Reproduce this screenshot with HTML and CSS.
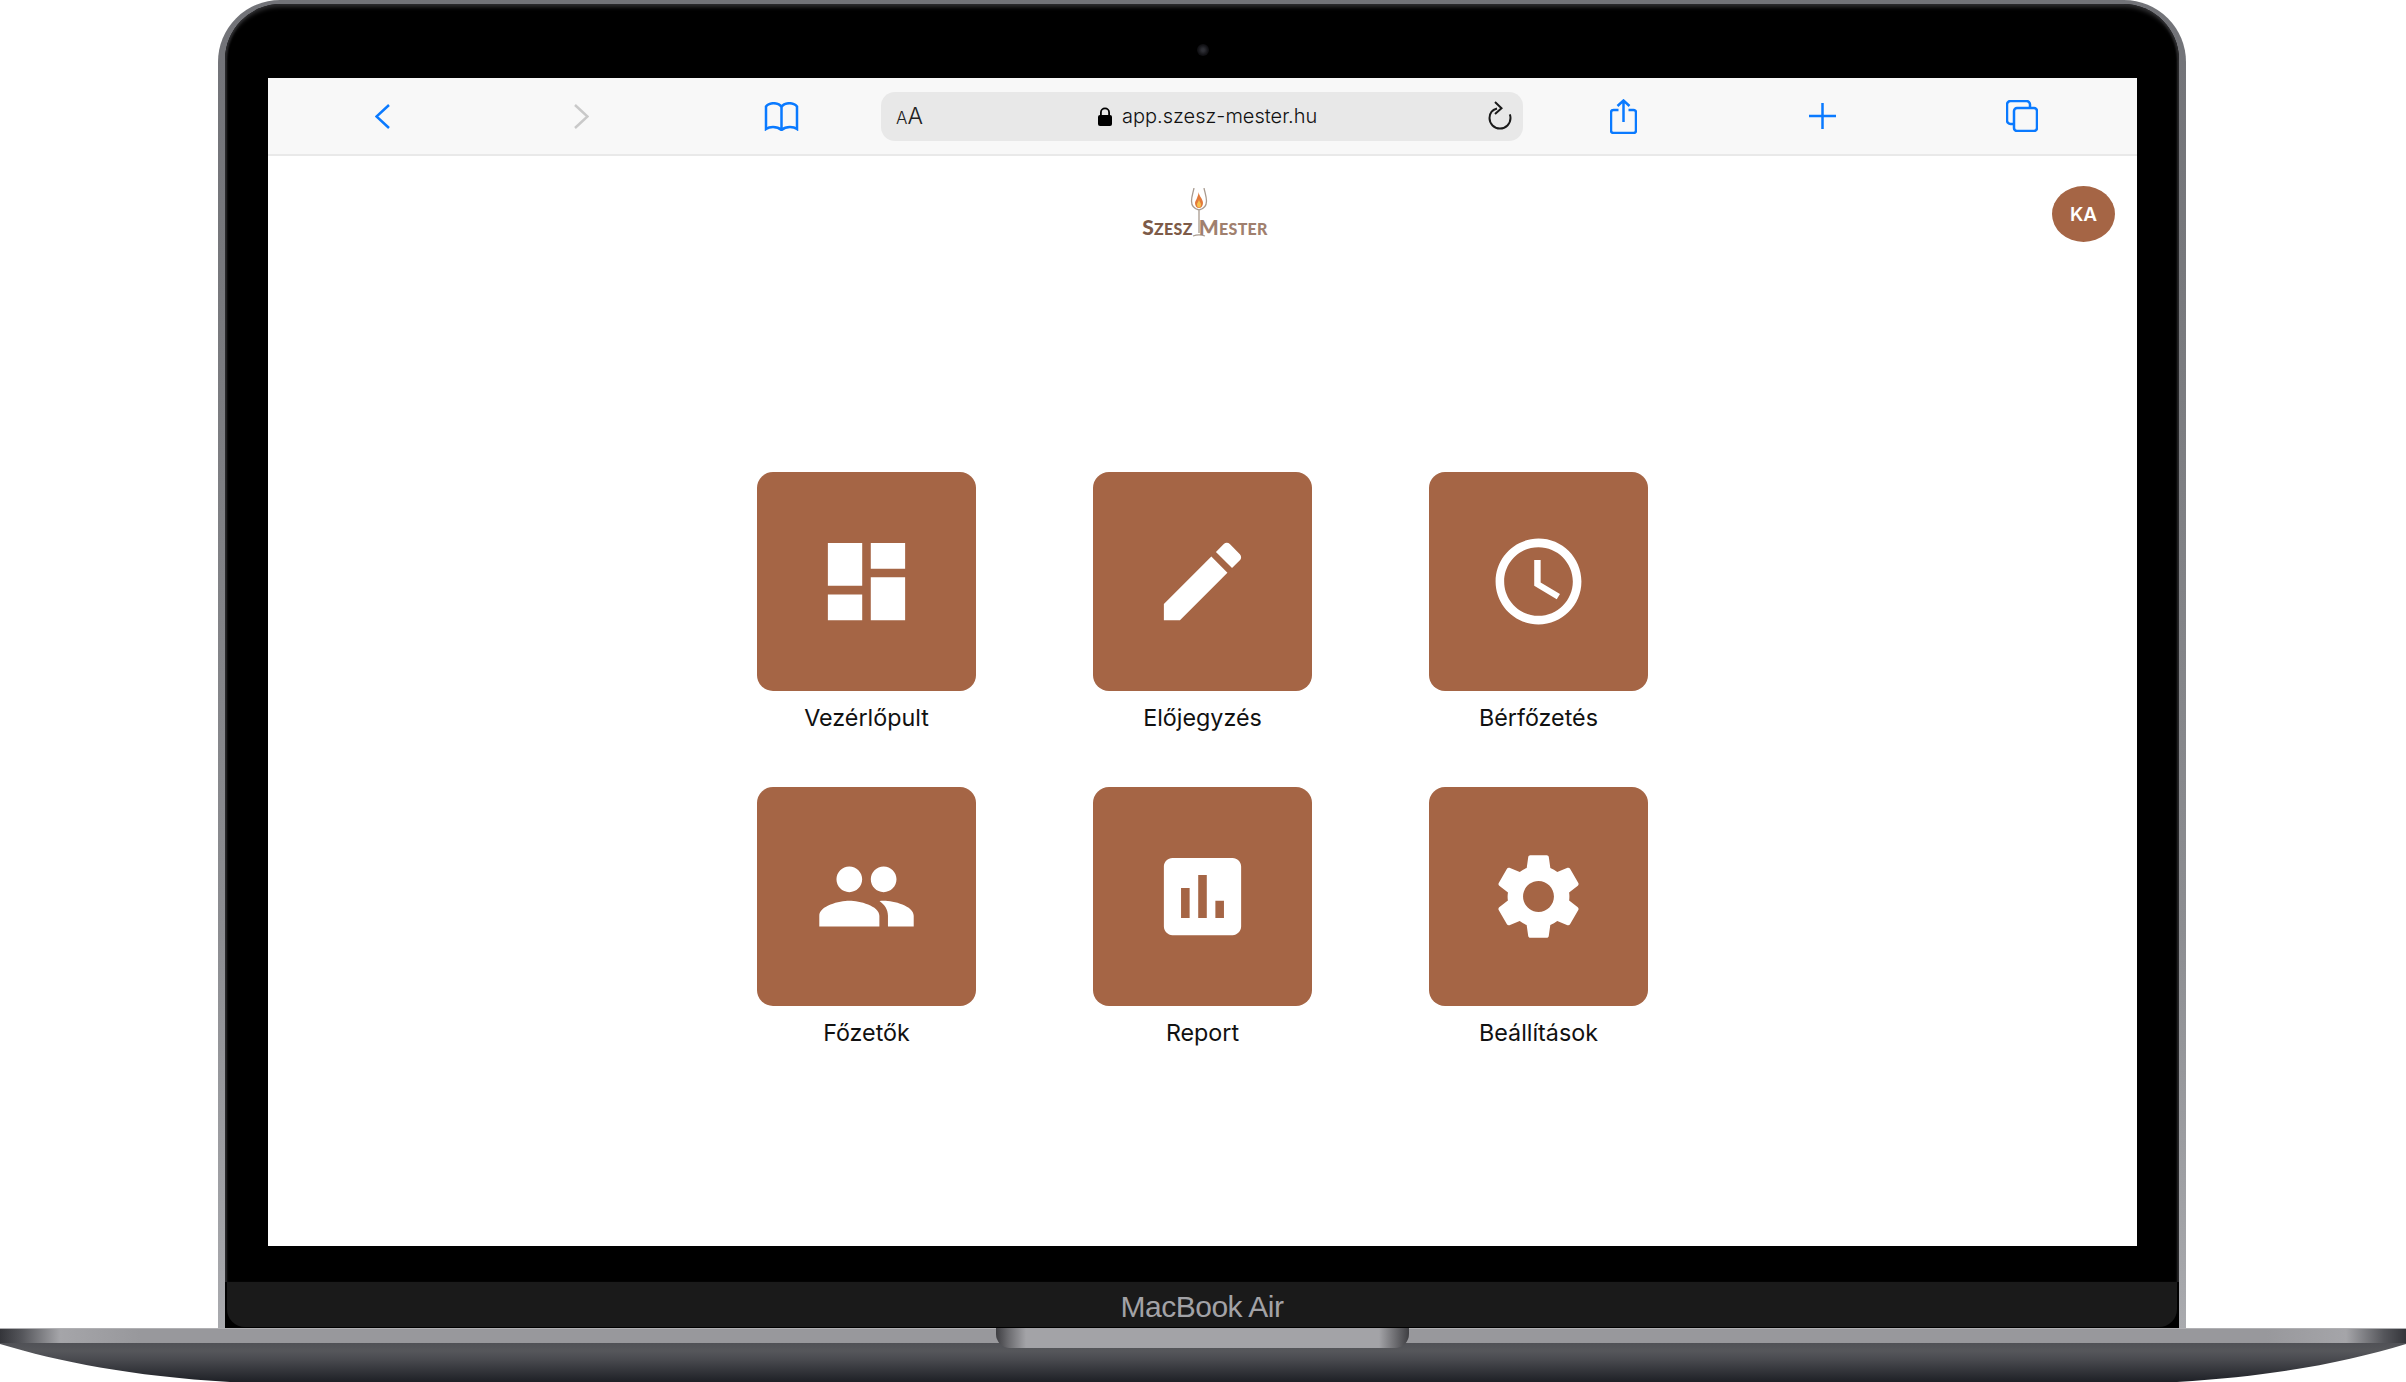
FILE: index.html
```html
<!DOCTYPE html>
<html lang="hu">
<head>
    <meta charset="UTF-8">
    <title>Szesz Mester</title>
    <link rel="stylesheet" href="styles.css">
</head>
<body>
    <div class="laptop">
        <div class="lid">
            <div class="bezel">
                <div class="camera-row"><span class="camera"></span></div>
                <div class="screen">
                    <div class="toolbar">
                        <svg class="tool-icon back" viewBox="0 0 15 25"><path d="M14 1 1.500 12.500 14 24"/></svg>
                        <svg class="tool-icon forward" viewBox="0 0 15 25"><path d="M1 1l12.500 11.500L1 24"/></svg>
                        <svg class="tool-icon book" viewBox="0 0 35 29"><path d="M17.500 5C16 2.500 13 1.200 9.500 1.200 6.500 1.200 3.500 2.500 2 4.500V27c2-1.500 4.500-2 7-2 3.500 0 6 .8 8.500 3 2.500-2.200 5-3 8.500-3 2.500 0 5 .5 7 2V4.500C31.500 2.500 28.500 1.200 25.500 1.200 22 1.200 19 2.500 17.500 5zM17.500 5V28"/></svg>
                        <div class="url-bar">
                            <span class="aa"><small>A</small>A</span>
                            <span class="address">
                                <svg class="lock" viewBox="0 0 14 19"><path d="M2 8V5.500a5 5 0 0 1 10 0V8h-1.800V5.500a3.200 3.200 0 0 0-6.400 0V8z"/><rect y="8" width="14" height="11" rx="2"/></svg>
                                app.szesz-mester.hu
                            </span>
                            <svg class="reload" viewBox="0 0 24 29"><path d="M9 7.500C4.500 8.800 1.500 12.500 1.500 17c0 5.800 4.600 10.500 10.500 10.500S22.500 22.800 22.500 17c0-1.300-.2-2.500-.7-3.700"/><path d="M7 1l6.500 6.200L7 13"/></svg>
                        </div>
                        <svg class="tool-icon share" viewBox="0 0 27 35"><path d="M8.500 11H3.500A2.500 2.500 0 0 0 1 13.500v18A2.500 2.500 0 0 0 3.500 34h20a2.500 2.500 0 0 0 2.500-2.500v-18A2.500 2.500 0 0 0 23.500 11H18.500M13.500 23V1.500M7.500 7l6-5.500 6 5.500"/></svg>
                        <svg class="tool-icon plus" viewBox="0 0 27 26"><path d="M13.500 0V26M0 13H27"/></svg>
                        <svg class="tool-icon tabs" viewBox="0 0 32 32"><path d="M7 24H4.500A3.500 3.500 0 0 1 1 20.500V4.500A3.500 3.500 0 0 1 4.500 1h16A3.500 3.500 0 0 1 24 4.500V7"/><rect x="8" y="8" width="23" height="23" rx="3"/></svg>
                    </div>
                    <div class="app">
                        <div class="app-header">
                            <div class="logo">
                                <svg class="logo-glass" viewBox="0 0 18 50">
                                    <path class="glass-line" d="M4 0C3 5 1.500 9 1.500 13c0 5 3 8 7.500 9 4.500-1 7.500-4 7.500-9 0-4-1.500-8-2.500-13M9 22V45M3 48c4-1.500 8-1.500 12 0"/>
                                    <path class="flame-outer" d="M8.500 4c.5 4 4.500 7 4.500 11 0 3-1.800 5-4 5s-4-2-4-5c0-2 1.500-3 2-5 .5-2 1.500-3 1.500-6z"/>
                                    <path class="flame-inner" d="M9 11c0 2.500 2 3.500 2 5.500S10.200 19.500 9 19.500 7 18.500 7 16.500 9 13.500 9 11z"/>
                                </svg>
                                <div class="logo-text"><span class="word-dark">S<small>ZESZ</small></span><span class="word-light">M<small>ESTER</small></span></div>
                            </div>
                            <div class="avatar">KA</div>
                        </div>
                        <div class="tiles">
                            <a class="tile" href="#">
                                <span class="tile-box"><svg viewBox="0 0 24 24"><path d="M3 13h8V3H3v10zm0 8h8v-6H3v6zm10 0h8V11h-8v10zm0-18v6h8V3h-8z"/></svg></span>
                                <span class="tile-label">Vezérlőpult</span>
                            </a>
                            <a class="tile" href="#">
                                <span class="tile-box"><svg viewBox="0 0 24 24"><path d="M3 17.250V21h3.750L17.810 9.940l-3.750-3.750L3 17.250zM20.710 7.040c.39-.39.39-1.020 0-1.410l-2.340-2.340c-.39-.39-1.020-.39-1.410 0l-1.830 1.830 3.750 3.750 1.830-1.830z"/></svg></span>
                                <span class="tile-label">Előjegyzés</span>
                            </a>
                            <a class="tile" href="#">
                                <span class="tile-box"><svg viewBox="0 0 24 24"><path d="M11.990 2C6.470 2 2 6.480 2 12s4.470 10 9.990 10C17.520 22 22 17.520 22 12S17.520 2 11.990 2zM12 20c-4.420 0-8-3.580-8-8s3.580-8 8-8 8 3.580 8 8-3.580 8-8 8zM12.500 7H11v6l5.250 3.150.75-1.230-4.500-2.670z"/></svg></span>
                                <span class="tile-label">Bérfőzetés</span>
                            </a>
                            <a class="tile" href="#">
                                <span class="tile-box"><svg viewBox="0 0 24 24"><path d="M16 11c1.660 0 2.990-1.340 2.990-3S17.660 5 16 5c-1.660 0-3 1.340-3 3s1.340 3 3 3zm-8 0c1.660 0 2.990-1.340 2.990-3S9.660 5 8 5C6.340 5 5 6.340 5 8s1.340 3 3 3zm0 2c-2.330 0-7 1.170-7 3.500V19h14v-2.500c0-2.330-4.670-3.500-7-3.500zm8 0c-.29 0-.62.020-.97.050 1.160.84 1.970 1.970 1.970 3.450V19h6v-2.500c0-2.330-4.670-3.500-7-3.500z"/></svg></span>
                                <span class="tile-label">Főzetők</span>
                            </a>
                            <a class="tile" href="#">
                                <span class="tile-box"><svg viewBox="0 0 24 24"><path d="M19 3H5c-1.100 0-2 .9-2 2v14c0 1.100.9 2 2 2h14c1.100 0 2-.9 2-2V5c0-1.100-.9-2-2-2zM9 17H7v-7h2v7zm4 0h-2V7h2v10zm4 0h-2v-4h2v4z"/></svg></span>
                                <span class="tile-label">Report</span>
                            </a>
                            <a class="tile" href="#">
                                <span class="tile-box"><svg viewBox="0 0 24 24"><path d="M19.140 12.940c.04-.3.060-.61.060-.94 0-.32-.02-.64-.07-.94l2.030-1.580c.18-.14.230-.41.120-.61l-1.920-3.320c-.12-.22-.37-.29-.59-.22l-2.390.96c-.5-.38-1.030-.7-1.620-.94l-.36-2.540c-.04-.24-.24-.41-.48-.41h-3.840c-.24 0-.43.17-.47.41l-.36 2.540c-.59.24-1.130.57-1.620.94l-2.390-.96c-.22-.08-.47 0-.59.22L2.740 8.870c-.12.21-.08.47.12.61l2.030 1.580c-.05.3-.09.63-.09.94s.02.64.07.94l-2.030 1.580c-.18.14-.23.41-.12.61l1.920 3.320c.12.22.37.29.59.22l2.390-.96c.5.38 1.030.7 1.620.94l.36 2.540c.05.24.24.41.48.41h3.840c.24 0 .44-.17.47-.41l.36-2.540c.59-.24 1.130-.56 1.620-.94l2.390.96c.22.08.47 0 .59-.22l1.920-3.320c.12-.22.070-.47-.12-.61l-2.010-1.580zM12 15.600c-1.980 0-3.600-1.620-3.600-3.600s1.620-3.600 3.600-3.600 3.600 1.620 3.600 3.600-1.620 3.600-3.600 3.600z"/></svg></span>
                                <span class="tile-label">Beállítások</span>
                            </a>
                        </div>
                    </div>
                </div>
            </div>
            <div class="chin-back"><div class="chin">MacBook Air</div></div>
        </div>
        <div class="base">
            <div class="base-band"></div>
            <div class="base-body"></div>
            <div class="notch"></div>
        </div>
    </div>
</body>
</html>
```

FILE: styles.css
```css
/* Reset */
* {
    margin: 0;
    padding: 0;
    box-sizing: border-box;
}

body {
    width: 2406px;
    height: 1382px;
    overflow: hidden;
    background-color: #fff;
    font-family: 'Inter', sans-serif;
}

/* Laptop frame */
.laptop {
    display: flex;
    flex-direction: column;
    height: 1382px;
}

.lid {
    display: flex;
    flex-direction: column;
    width: 1968px;
    height: 1328px;
    margin-left: 218px;
    padding: 4px 7px 0 7px;
    background: linear-gradient(to bottom, #727378, #77787c 20%, #8c8d91 70%, #a9aaae);
    border-radius: 62px 62px 0 0;
}

.bezel {
    display: flex;
    flex-direction: column;
    height: 1278px;
    padding: 0 42px 36px 43px;
    background-color: #000;
    border-radius: 56px 56px 0 0;
    box-shadow: inset 0 5px 4px -2px #2e2e30, inset 3px 0 2px -1px #2a2a2c, inset -3px 0 2px -1px #2a2a2c;
}

.camera-row {
    display: flex;
    justify-content: center;
    align-items: center;
    height: 74px;
    padding-top: 18px;
}

.camera {
    width: 12px;
    height: 12px;
    border-radius: 50%;
    background: radial-gradient(circle, #2e2f35 15%, #141418 55%, #000);
}

.chin-back {
    height: 46px;
    padding: 0 2px 1px;
    background-color: #000;
}

.chin {
    display: flex;
    justify-content: center;
    align-items: center;
    height: 45px;
    background-color: #1a1a1a;
    border-radius: 0 0 18px 18px;
    color: #a2a2a6;
    font-family: 'Liberation Sans', sans-serif;
    font-size: 30px;
    letter-spacing: -0.5px;
    padding-top: 4px;
}

/* Base */
.base {
    position: relative;
    height: 54px;
}

.base-band {
    height: 15px;
    border-top: 1px solid #b0b0b3;
    background: linear-gradient(to right, #34353a 0, #55565b 22px, #a5a5a9 60px, #98989c 140px, #98989c 2266px, #a5a5a9 2346px, #55565b 2384px, #34353a 100%);
}

.base-body {
    height: 39px;
    background: linear-gradient(to bottom, #505156 0, #56575b 8px, #4a4b50 16px, #1e2026 100%);
    clip-path: path('M0 1 C60 19 130 33 230 39 L2177 39 C2277 33 2346 19 2406 1 L2406 0 L0 0 Z');
}

.notch {
    position: absolute;
    top: 0;
    left: 996px;
    width: 413px;
    height: 20px;
    background: linear-gradient(to right, #3e3e42 0, #6a6a6e 12px, #a3a3a7 30px, #a3a3a7 383px, #6a6a6e 400px, #3e3e42 100%);
    border-radius: 0 0 14px 14px;
}

/* Browser */
.screen {
    display: flex;
    flex-direction: column;
    width: 1869px;
    height: 1168px;
    background-color: #fff;
}

.toolbar {
    display: flex;
    align-items: center;
    height: 78px;
    padding: 0 77px 0 107px;
    background-color: #f8f8f8;
    border-bottom: 2px solid #e9e9e9;
}

.tool-icon {
    flex-shrink: 0;
    fill: none;
    stroke: #0a7aff;
    stroke-width: 2.500;
}

.back {
    width: 15px;
    height: 25px;
}

.forward {
    width: 15px;
    height: 25px;
    margin-left: 184px;
    stroke: #c9c9c9;
}

.book {
    width: 35px;
    height: 29px;
    margin-left: 175px;
}

.url-bar {
    display: flex;
    align-items: center;
    justify-content: space-between;
    position: relative;
    flex-shrink: 0;
    width: 642px;
    height: 49px;
    margin-left: 82px;
    padding: 0 11px 0 15px;
    background-color: #e8e8e8;
    border-radius: 14px;
}

.aa {
    font-size: 23px;
    font-weight: 300;
    color: #222;
}

.aa small {
    font-size: 17px;
}

.address {
    position: absolute;
    left: 217px;
    display: flex;
    align-items: center;
    gap: 10px;
    font-size: 20px;
    font-weight: 300;
    color: #111;
    white-space: nowrap;
}

.lock {
    width: 14px;
    height: 19px;
    fill: #000;
}

.reload {
    width: 24px;
    height: 29px;
    margin-bottom: 2px;
    fill: none;
    stroke: #1a1a1a;
    stroke-width: 2;
}

.share {
    width: 27px;
    height: 35px;
    margin-left: 87px;
}

.plus {
    width: 27px;
    height: 26px;
    margin-left: 172px;
}

.tabs {
    width: 32px;
    height: 32px;
    margin-left: 170px;
}

/* App */
.app {
    flex: 1;
    display: flex;
    flex-direction: column;
    align-items: center;
}

.app-header {
    position: relative;
    width: 100%;
    display: flex;
    justify-content: center;
    height: 316px;
}

.logo {
    position: relative;
    width: 130px;
    height: 50px;
    margin-top: 32px;
}

/* glass stands in the gap between the two words */
.logo-glass {
    position: absolute;
    top: 0;
    left: 52px;
    width: 18px;
    height: 50px;
}

.glass-line {
    fill: none;
    stroke: #a89a8f;
    stroke-width: 1.300;
}

.flame-outer {
    fill: #e2793a;
}

.flame-inner {
    fill: #f6c14d;
}

.logo-text {
    display: flex;
    gap: 6px;
    justify-content: center;
    margin-top: 29px;
    padding-left: 5px;
    font-family: 'Lato', sans-serif;
    font-size: 21px;
    line-height: 20px;
    font-weight: 900;
    letter-spacing: 0.300px;
    white-space: nowrap;
    position: relative;
}

.logo-text small {
    font-size: 16px;
}

.word-dark {
    color: #7d5b48;
}

.word-light {
    color: #a0806e;
}

.avatar {
    position: absolute;
    top: 30px;
    right: 22px;
    width: 63px;
    height: 56px;
    display: flex;
    justify-content: center;
    align-items: center;
    border-radius: 50%;
    background-color: #a56545;
    color: #fff;
    font-size: 19px;
    font-weight: 600;
}

.tiles {
    display: grid;
    grid-template-columns: repeat(3, 219px);
    column-gap: 117px;
    row-gap: 38px;
}

.tile {
    display: flex;
    flex-direction: column;
    align-items: center;
    text-decoration: none;
}

.tile-box {
    display: flex;
    justify-content: center;
    align-items: center;
    width: 219px;
    height: 219px;
    background-color: #a56545;
    border-radius: 16px;
}

.tile-box svg {
    width: 103px;
    height: 103px;
    fill: #fff;
}

.tile-label {
    height: 58px;
    padding-top: 12px;
    font-size: 23.300px;
    line-height: 30px;
    color: #111;
}
```
